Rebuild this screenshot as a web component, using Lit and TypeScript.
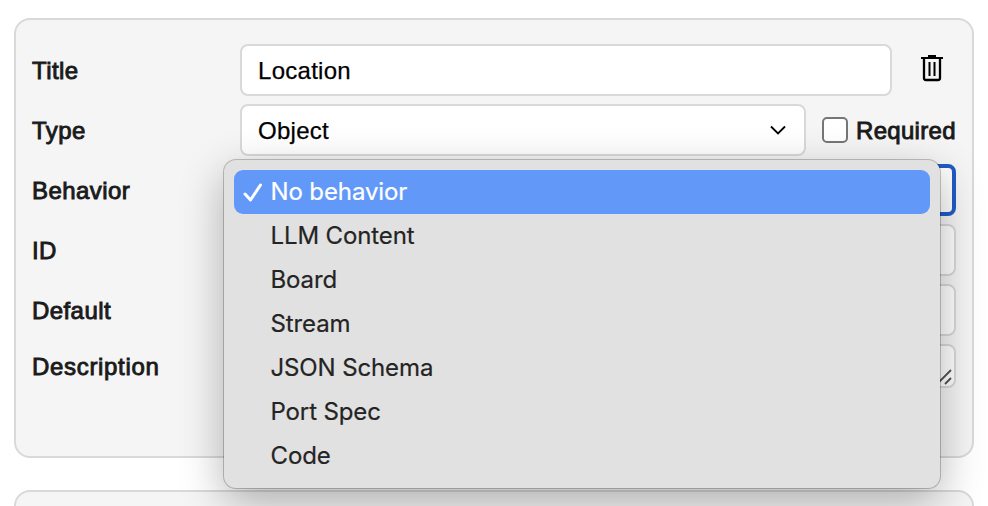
import { LitElement, html, css } from "lit";
import { customElement } from "lit/decorators.js";
import { classMap } from "lit/directives/class-map.js";

const OPTIONS = ["No behavior", "LLM Content", "Board", "Stream", "JSON Schema", "Port Spec", "Code"];

@customElement("app-root")
export class AppRoot extends LitElement {
  static styles = css`
    :host {
      display: block;
      position: relative;
      box-sizing: border-box;
      height: 506px;
      overflow: hidden;
      padding: 18px 14px 0;
      background: #fff;
      font: 24px/28px "Liberation Sans", Arial, sans-serif;
      color: #1a1a1a;
    }
    * { box-sizing: border-box; }
    .card {
      height: 440px;
      margin-bottom: 32px;
      padding: 24px 16px;
      border: 2px solid #d9d9d9;
      border-radius: 16px;
      background: #f5f5f5;
      display: flex;
      flex-direction: column;
      gap: 8px;
    }
    .row {
      display: grid;
      grid-template-columns: 200px 1fr;
      column-gap: 8px;
      align-items: center;
      height: 52px;
      flex: none;
    }
    .row.short { height: 44px; }
    .label {
      padding-top: 2px;
      -webkit-text-stroke: 0.9px #1a1a1a;
      letter-spacing: 0.42px;
      white-space: nowrap;
    }
    .short .label { letter-spacing: 0.68px; }
    .cell { display: flex; align-items: center; height: 100%; min-width: 0; }
    .field {
      flex: 1;
      height: 100%;
      display: flex;
      align-items: center;
      justify-content: space-between;
      padding: 2px 16px 0;
      border: 2px solid #d9d9d9;
      border-radius: 8px;
      background: #fff;
      color: #000;
      letter-spacing: 0.28px;
      -webkit-text-stroke: 0.25px #000;
    }
    .field.focused { border: 4px solid #215bc8; }
    .field.area { align-items: flex-end; justify-content: flex-end; padding: 0 2px 1px; }
    .trash { width: 64px; display: flex; justify-content: center; margin-top: -4px; padding-left: 16px; }
    .check {
      width: 26px;
      height: 26px;
      margin: 0 8px 0 16px;
      border: 2px solid #767676;
      border-radius: 5px;
      background: #fff;
    }
    .required { width: 100px; letter-spacing: 0.3px; }
    svg { display: block; flex: none; }
    .menu {
      position: absolute;
      left: 224px;
      top: 160px;
      width: 716px;
      height: 328px;
      padding: 10px;
      border-radius: 12px;
      background: #e1e1e1;
      box-shadow: 0 0 0 1px rgba(0, 0, 0, 0.22), 0 14px 44px rgba(0, 0, 0, 0.3);
      font: 24px/44px Inter, sans-serif;
      letter-spacing: -0.12px;
      -webkit-text-stroke: 0.2px currentColor;
      color: #242424;
    }
    .item {
      display: flex;
      align-items: center;
      height: 44px;
      border-radius: 9px;
      white-space: nowrap;
    }
    .item.selected { background: #6299f8; color: #fff; }
    .mark { width: 36.5px; padding-left: 8.5px; }
  `;

  private label(text: string) {
    return html`<div class="label">${text}</div>`;
  }

  render() {
    return html`
      <div class="card">
        <div class="row">
          ${this.label("Title")}
          <div class="cell">
            <div class="field">Location</div>
            <div class="trash">
              <svg width="24" height="28" viewBox="0 0 24 28" fill="none" stroke="#000">
                <path d="M1 4H23" stroke-width="2" />
                <path d="M8 2.5H16" stroke-width="3" />
                <path d="M4 4V24Q4 26 6 26H18Q20 26 20 24V4" stroke-width="2.3" />
                <path d="M9.5 8V22M14.5 8V22" stroke-width="2" />
              </svg>
            </div>
          </div>
        </div>
        <div class="row">
          ${this.label("Type")}
          <div class="cell">
            <div class="field">
              Object
              <svg width="20" height="12" viewBox="0 0 20 12" fill="none" stroke="#000" stroke-width="1.8">
                <path d="M3 1.5L10 8.5L17 1.5" />
              </svg>
            </div>
            <div class="check"></div>
            <div class="label required">Required</div>
          </div>
        </div>
        <div class="row">
          ${this.label("Behavior")}
          <div class="cell"><div class="field focused"></div></div>
        </div>
        <div class="row">
          ${this.label("ID")}
          <div class="cell"><div class="field"></div></div>
        </div>
        <div class="row">
          ${this.label("Default")}
          <div class="cell"><div class="field"></div></div>
        </div>
        <div class="row short">
          ${this.label("Description")}
          <div class="cell">
            <div class="field area">
              <svg width="14" height="16" viewBox="0 0 14 16" fill="none" stroke="#505050" stroke-width="1.8">
                <path d="M0 14L13 1M7 15L13 9" />
              </svg>
            </div>
          </div>
        </div>
      </div>
      <div class="card"></div>
      <div class="menu">
        ${OPTIONS.map(
          (option, i) => html`
            <div class=${classMap({ item: true, selected: i === 0 })}>
              <div class="mark">
                ${i === 0
                  ? html`<svg width="20" height="20" viewBox="0 0 20 20" fill="none" stroke="#fff" stroke-width="3" stroke-linecap="round" stroke-linejoin="round">
                      <path d="M2 12L7.5 18L17.5 3" />
                    </svg>`
                  : ""}
              </div>
              ${option}
            </div>
          `,
        )}
      </div>
    `;
  }
}
